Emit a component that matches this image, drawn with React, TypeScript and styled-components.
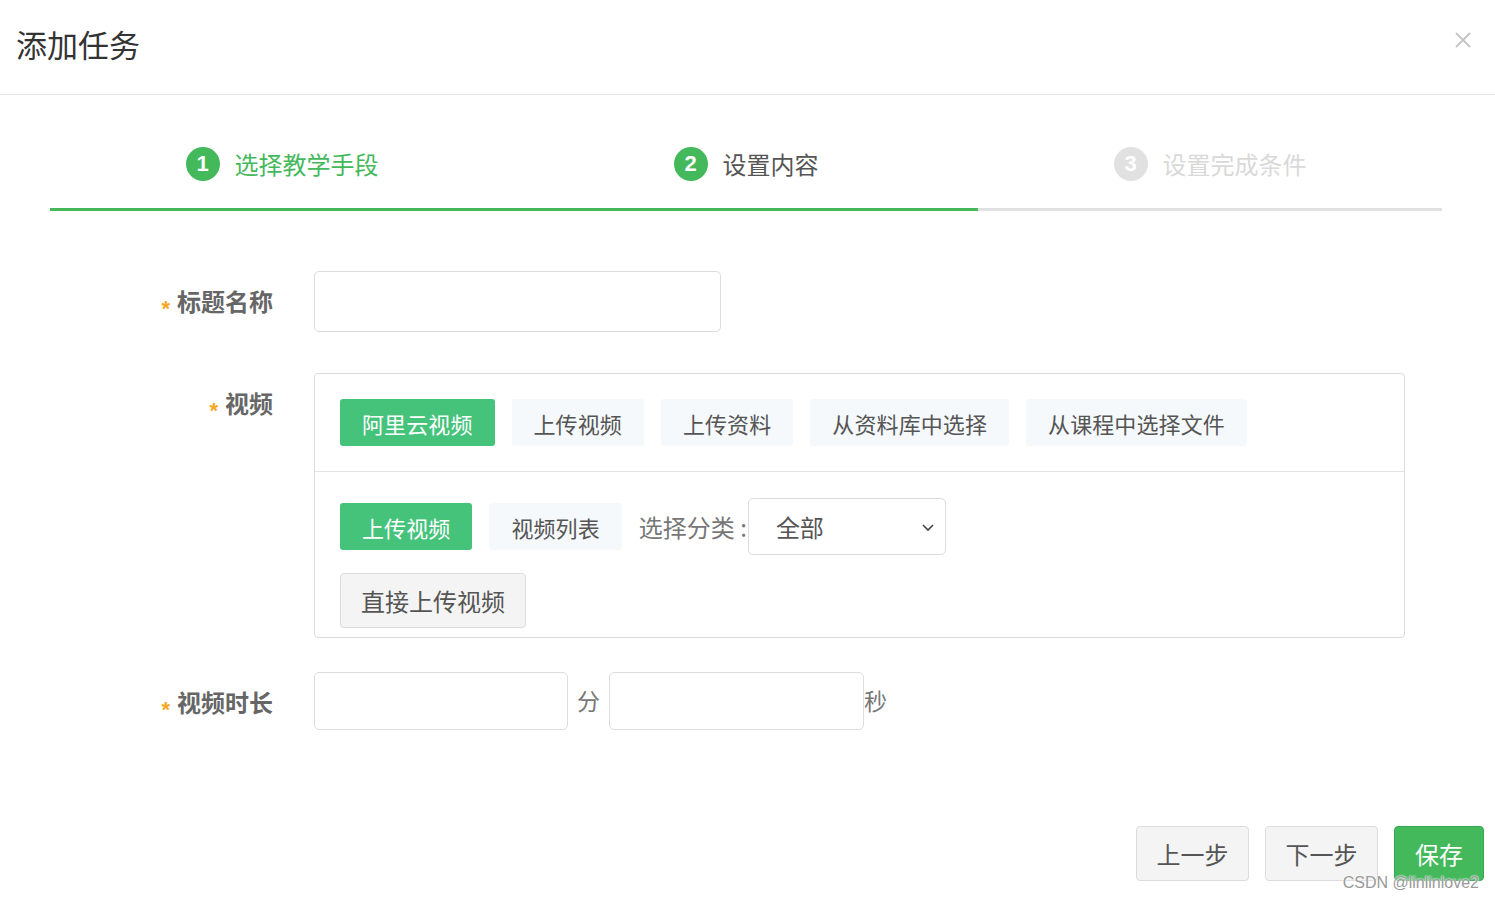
import React from 'react';
import styled, { createGlobalStyle } from 'styled-components';

const GlobalStyle = createGlobalStyle`
  html, body {
    margin: 0;
    padding: 0;
    background: #fff;
  }
  body {
    font-family: "Noto Sans CJK SC", "Liberation Sans", sans-serif;
    color: #555;
  }
`;

const Page = styled.div`
  position: relative;
  width: 1495px;
  height: 898px;
  overflow: hidden;
  background: #fff;
`;

const Header = styled.div`
  height: 94px;
  border-bottom: 1px solid #e5e5e5;
  display: flex;
  align-items: center;
  justify-content: space-between;
  padding: 0 24px 0 16px;
`;

const Title = styled.h2`
  margin: 0;
  font-size: 31px;
  font-weight: 400;
  color: #333;
  line-height: 1;
  padding-bottom: 8px;
`;

const CloseBtn = styled.div`
  width: 16px;
  height: 16px;
  margin-bottom: 14px;
  display: flex;
  svg {
    display: block;
  }
`;

const Steps = styled.div`
  display: flex;
  margin: 52px 53px 0 50px;
`;

const Step = styled.div<{ $done: boolean }>`
  flex: 1;
  display: flex;
  justify-content: center;
  align-items: center;
  gap: 15px;
  padding-bottom: 27px;
  border-bottom: 3px solid ${({ $done }) => ($done ? '#43b95c' : '#e1e1e1')};
`;

const StepNum = styled.span<{ $state: 'active' | 'done' | 'todo' }>`
  width: 34px;
  height: 34px;
  border-radius: 50%;
  background: ${({ $state }) => ($state === 'todo' ? '#e1e1e1' : '#43b95c')};
  color: #fff;
  font-family: "Liberation Sans", Arial, sans-serif;
  font-size: 22px;
  font-weight: 700;
  display: flex;
  align-items: center;
  justify-content: center;
  line-height: 1;
`;

const StepText = styled.span<{ $state: 'active' | 'done' | 'todo' }>`
  font-size: 24px;
  line-height: 32px;
  color: ${({ $state }) =>
    $state === 'active' ? '#43b95c' : $state === 'done' ? '#555' : '#d9d9d9'};
`;

const Form = styled.div`
  padding-left: 50px;
  margin-top: 60px;
`;

const Row = styled.div<{ $mb: number }>`
  display: flex;
  align-items: flex-start;
  margin-bottom: ${({ $mb }) => $mb}px;
`;

const Label = styled.div`
  width: 223px;
  height: 60px;
  margin-right: 41px;
  flex-shrink: 0;
  text-align: right;
  font-size: 24px;
  font-weight: 700;
  color: #666;
  line-height: 60px;
`;

const Star = styled.span`
  color: #f5a623;
  font-family: "Liberation Sans", Arial, sans-serif;
  font-size: 22px;
  font-weight: 700;
  line-height: 0;
  margin-right: 7px;
  vertical-align: -5px;
`;

const TextInput = styled.div<{ $w: number; $h: number }>`
  width: ${({ $w }) => $w}px;
  height: ${({ $h }) => $h}px;
  box-sizing: border-box;
  border: 1px solid #dcdcdc;
  border-radius: 5px;
  background: #fff;
`;

const VideoBox = styled.div`
  width: 1091px;
  box-sizing: border-box;
  border: 1px solid #dcdcdc;
  border-radius: 4px;
`;

const TabBar = styled.div`
  display: flex;
  gap: 17px;
  padding: 25px;
  border-bottom: 1px solid #e3e3e3;
`;

const Chip = styled.div<{ $on?: boolean }>`
  height: 47px;
  padding: 0 22px;
  border-radius: 3px;
  display: flex;
  align-items: center;
  font-size: 22px;
  letter-spacing: 0.1px;
  white-space: nowrap;
  background: ${({ $on }) => ($on ? '#46c37b' : '#f5f9fc')};
  color: ${({ $on }) => ($on ? '#fff' : '#555')};
`;

const Panel = styled.div`
  padding: 26px 25px 9px;
  display: flex;
  flex-direction: column;
  gap: 18px;
`;

const PanelRow = styled.div`
  display: flex;
  align-items: center;
  gap: 17px;
`;

const FilterLabel = styled.span`
  font-size: 24px;
  color: #777;
  margin-right: -16px;
  white-space: nowrap;
`;

const Select = styled.div`
  width: 198px;
  height: 57px;
  box-sizing: border-box;
  border: 1px solid #dcdcdc;
  border-radius: 5px;
  display: flex;
  align-items: center;
  justify-content: space-between;
  padding: 0 9px 0 27px;
  font-size: 24px;
  color: #555;
`;

const GreyButton = styled.div<{ $w?: number }>`
  height: 55px;
  ${({ $w }) => ($w ? `width: ${$w}px;` : 'padding: 0 20px;')}
  box-sizing: border-box;
  border: 1px solid #dcdcdc;
  border-radius: 4px;
  background: #f4f4f4;
  display: flex;
  align-items: center;
  justify-content: center;
  font-size: 24px;
  color: #555;
  white-space: nowrap;
  align-self: flex-start;
`;

const Unit = styled.span<{ $ml: number; $mr: number }>`
  font-size: 23px;
  color: #777;
  line-height: 57px;
  margin: 0 ${({ $mr }) => $mr}px 0 ${({ $ml }) => $ml}px;
`;

const Footer = styled.div`
  display: flex;
  justify-content: flex-end;
  gap: 16px;
  padding-right: 11px;
  margin-top: 94px;
`;

const SaveButton = styled.div`
  width: 90px;
  height: 55px;
  box-sizing: border-box;
  border: 1px solid #3aa852;
  border-radius: 4px;
  background: #43b95c;
  color: #fff;
  font-size: 24px;
  display: flex;
  align-items: center;
  justify-content: center;
`;

const Watermark = styled.div`
  position: absolute;
  right: 16px;
  bottom: 6px;
  font-family: "Liberation Sans", Arial, sans-serif;
  font-size: 16px;
  color: #999;
  text-shadow: 0 0 2px #fff, 0 0 2px #fff;
`;

type StepState = 'active' | 'done' | 'todo';

const steps: { n: number; text: string; state: StepState; line: boolean }[] = [
  { n: 1, text: '选择教学手段', state: 'active', line: true },
  { n: 2, text: '设置内容', state: 'done', line: true },
  { n: 3, text: '设置完成条件', state: 'todo', line: false },
];

const tabs = ['阿里云视频', '上传视频', '上传资料', '从资料库中选择', '从课程中选择文件'];

const App: React.FC = () => {
  return (
    <Page>
      <GlobalStyle />
      <Header>
        <Title>添加任务</Title>
        <CloseBtn>
          <svg width="16" height="16" viewBox="0 0 16 16">
            <path d="M1 1L15 15M15 1L1 15" stroke="#c6c6c6" strokeWidth="2" />
          </svg>
        </CloseBtn>
      </Header>

      <Steps>
        {steps.map(s => (
          <Step key={s.n} $done={s.line}>
            <StepNum $state={s.state}>{s.n}</StepNum>
            <StepText $state={s.state}>{s.text}</StepText>
          </Step>
        ))}
      </Steps>

      <Form>
        <Row $mb={41}>
          <Label><Star>*</Star>标题名称</Label>
          <TextInput $w={407} $h={61} />
        </Row>

        <Row $mb={34}>
          <Label><Star>*</Star>视频</Label>
          <VideoBox>
            <TabBar>
              {tabs.map((t, i) => (
                <Chip key={t} $on={i === 0}>{t}</Chip>
              ))}
            </TabBar>
            <Panel>
              <PanelRow>
                <Chip $on>上传视频</Chip>
                <Chip>视频列表</Chip>
                <FilterLabel>选择分类 :</FilterLabel>
                <Select>
                  全部
                  <svg width="16" height="16" viewBox="0 0 16 16">
                    <path d="M3 6l5 5 5-5" fill="none" stroke="#444" strokeWidth="1.6" />
                  </svg>
                </Select>
              </PanelRow>
              <GreyButton>直接上传视频</GreyButton>
            </Panel>
          </VideoBox>
        </Row>

        <Row $mb={0}>
          <Label><Star>*</Star>视频时长</Label>
          <TextInput $w={254} $h={58} />
          <Unit $ml={9} $mr={9}>分</Unit>
          <TextInput $w={255} $h={58} />
          <Unit $ml={0} $mr={0}>秒</Unit>
        </Row>
      </Form>

      <Footer>
        <GreyButton $w={113}>上一步</GreyButton>
        <GreyButton $w={113}>下一步</GreyButton>
        <SaveButton>保存</SaveButton>
      </Footer>

      <Watermark>CSDN @linlinlove2</Watermark>
    </Page>
  );
};

export default App;
